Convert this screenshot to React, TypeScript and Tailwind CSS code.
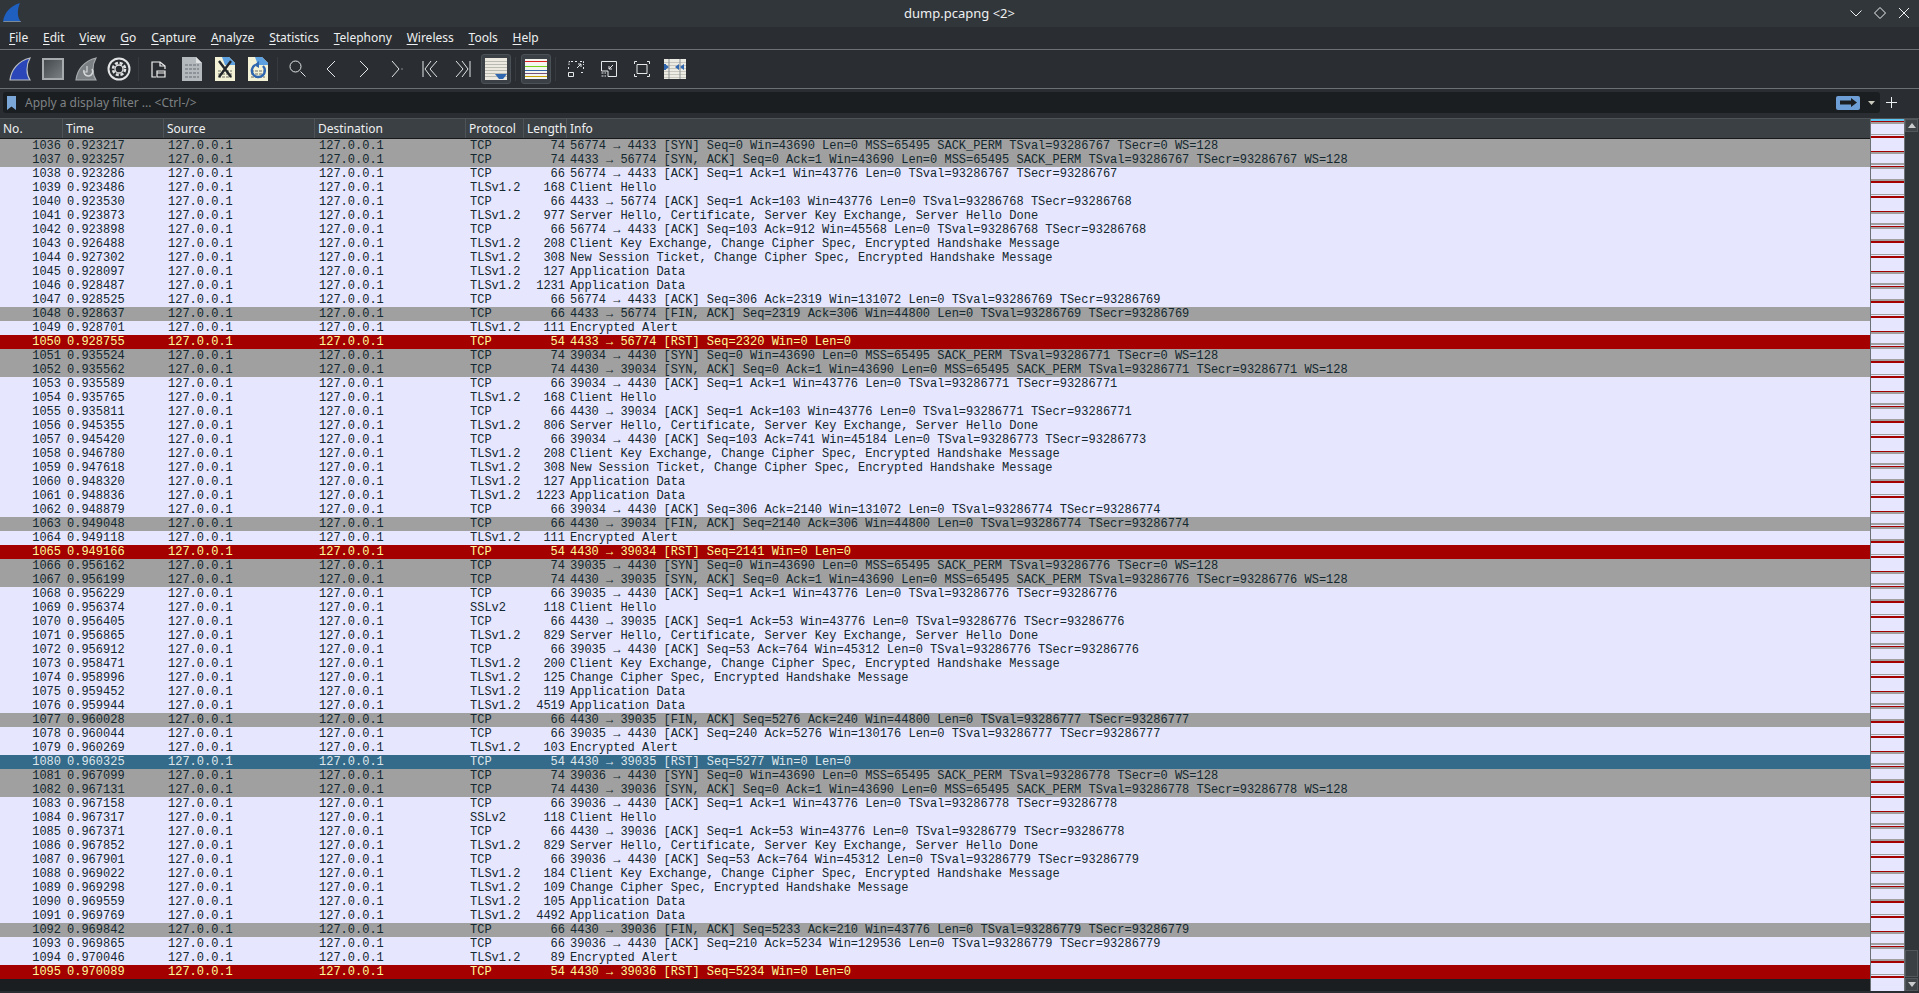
import { ReactNode } from 'react';

type Kind = 'n' | 'g' | 'r' | 's';

// time, protocol, length, info, kind
const T = 'TCP';
const L = 'TLSv1.2';
const S = 'SSLv2';
const HELLO = 'Server Hello, Certificate, Server Key Exchange, Server Hello Done';
const CKE = 'Client Key Exchange, Change Cipher Spec, Encrypted Handshake Message';
const NST = 'New Session Ticket, Change Cipher Spec, Encrypted Handshake Message';
const CCS = 'Change Cipher Spec, Encrypted Handshake Message';
const AD = 'Application Data';
const ALERT = 'Encrypted Alert';
const CH = 'Client Hello';
const syn = (a: number, b: number, ts: number) =>
  `${a} → ${b} [SYN] Seq=0 Win=43690 Len=0 MSS=65495 SACK_PERM TSval=${ts} TSecr=0 WS=128`;
const synAck = (a: number, b: number, ts: number) =>
  `${a} → ${b} [SYN, ACK] Seq=0 Ack=1 Win=43690 Len=0 MSS=65495 SACK_PERM TSval=${ts} TSecr=${ts} WS=128`;
const ack = (a: number, b: number, rest: string, ts: number, te: number = ts) =>
  `${a} → ${b} [ACK] ${rest} Len=0 TSval=${ts} TSecr=${te}`;
const fin = (a: number, b: number, rest: string, ts: number) =>
  `${a} → ${b} [FIN, ACK] ${rest} Len=0 TSval=${ts} TSecr=${ts}`;
const rst = (a: number, b: number, seq: number) => `${a} → ${b} [RST] Seq=${seq} Win=0 Len=0`;

const rows: [string, string, number, string, Kind?][] = [
  ['0.923217', T, 74, syn(56774, 4433, 93286767), 'g'],
  ['0.923257', T, 74, synAck(4433, 56774, 93286767), 'g'],
  ['0.923286', T, 66, ack(56774, 4433, 'Seq=1 Ack=1 Win=43776', 93286767)],
  ['0.923486', L, 168, CH],
  ['0.923530', T, 66, ack(4433, 56774, 'Seq=1 Ack=103 Win=43776', 93286768)],
  ['0.923873', L, 977, HELLO],
  ['0.923898', T, 66, ack(56774, 4433, 'Seq=103 Ack=912 Win=45568', 93286768)],
  ['0.926488', L, 208, CKE],
  ['0.927302', L, 308, NST],
  ['0.928097', L, 127, AD],
  ['0.928487', L, 1231, AD],
  ['0.928525', T, 66, ack(56774, 4433, 'Seq=306 Ack=2319 Win=131072', 93286769)],
  ['0.928637', T, 66, fin(4433, 56774, 'Seq=2319 Ack=306 Win=44800', 93286769), 'g'],
  ['0.928701', L, 111, ALERT],
  ['0.928755', T, 54, rst(4433, 56774, 2320), 'r'],
  ['0.935524', T, 74, syn(39034, 4430, 93286771), 'g'],
  ['0.935562', T, 74, synAck(4430, 39034, 93286771), 'g'],
  ['0.935589', T, 66, ack(39034, 4430, 'Seq=1 Ack=1 Win=43776', 93286771)],
  ['0.935765', L, 168, CH],
  ['0.935811', T, 66, ack(4430, 39034, 'Seq=1 Ack=103 Win=43776', 93286771)],
  ['0.945355', L, 806, HELLO],
  ['0.945420', T, 66, ack(39034, 4430, 'Seq=103 Ack=741 Win=45184', 93286773)],
  ['0.946780', L, 208, CKE],
  ['0.947618', L, 308, NST],
  ['0.948320', L, 127, AD],
  ['0.948836', L, 1223, AD],
  ['0.948879', T, 66, ack(39034, 4430, 'Seq=306 Ack=2140 Win=131072', 93286774)],
  ['0.949048', T, 66, fin(4430, 39034, 'Seq=2140 Ack=306 Win=44800', 93286774), 'g'],
  ['0.949118', L, 111, ALERT],
  ['0.949166', T, 54, rst(4430, 39034, 2141), 'r'],
  ['0.956162', T, 74, syn(39035, 4430, 93286776), 'g'],
  ['0.956199', T, 74, synAck(4430, 39035, 93286776), 'g'],
  ['0.956229', T, 66, ack(39035, 4430, 'Seq=1 Ack=1 Win=43776', 93286776)],
  ['0.956374', S, 118, CH],
  ['0.956405', T, 66, ack(4430, 39035, 'Seq=1 Ack=53 Win=43776', 93286776)],
  ['0.956865', L, 829, HELLO],
  ['0.956912', T, 66, ack(39035, 4430, 'Seq=53 Ack=764 Win=45312', 93286776)],
  ['0.958471', L, 200, CKE],
  ['0.958996', L, 125, CCS],
  ['0.959452', L, 119, AD],
  ['0.959944', L, 4519, AD],
  ['0.960028', T, 66, fin(4430, 39035, 'Seq=5276 Ack=240 Win=44800', 93286777), 'g'],
  ['0.960044', T, 66, ack(39035, 4430, 'Seq=240 Ack=5276 Win=130176', 93286777)],
  ['0.960269', L, 103, ALERT],
  ['0.960325', T, 54, rst(4430, 39035, 5277), 's'],
  ['0.967099', T, 74, syn(39036, 4430, 93286778), 'g'],
  ['0.967131', T, 74, synAck(4430, 39036, 93286778), 'g'],
  ['0.967158', T, 66, ack(39036, 4430, 'Seq=1 Ack=1 Win=43776', 93286778)],
  ['0.967317', S, 118, CH],
  ['0.967371', T, 66, ack(4430, 39036, 'Seq=1 Ack=53 Win=43776', 93286779, 93286778)],
  ['0.967852', L, 829, HELLO],
  ['0.967901', T, 66, ack(39036, 4430, 'Seq=53 Ack=764 Win=45312', 93286779)],
  ['0.969022', L, 184, CKE],
  ['0.969298', L, 109, CCS],
  ['0.969559', L, 105, AD],
  ['0.969769', L, 4492, AD],
  ['0.969842', T, 66, fin(4430, 39036, 'Seq=5233 Ack=210 Win=43776', 93286779), 'g'],
  ['0.969865', T, 66, ack(39036, 4430, 'Seq=210 Ack=5234 Win=129536', 93286779)],
  ['0.970046', L, 89, ALERT],
  ['0.970089', T, 54, rst(4430, 39036, 5234), 'r'],
];

const rowColors: Record<Kind, string> = {
  n: 'bg-[#e7e6ff] text-[#12272e]',
  g: 'bg-[#a0a0a0] text-[#12272e]',
  r: 'bg-[#a40000] text-[#fffc9c]',
  s: 'bg-[#346a8a] text-[#dfe7ec]',
};

const menus: [string, string][] = [
  ['F', 'ile'], ['E', 'dit'], ['V', 'iew'], ['G', 'o'], ['C', 'apture'], ['A', 'nalyze'],
  ['S', 'tatistics'], ['T', 'elephony'], ['W', 'ireless'], ['T', 'ools'], ['H', 'elp'],
];

function Tool({ children, active }: { children: ReactNode; active?: boolean }) {
  return (
    <div className="flex h-[33px] w-[33px] shrink-0 items-center justify-center">
      {active ? (
        <div className="flex h-[30px] w-[30px] items-center justify-center rounded-[3px] border border-[#4b5257] bg-[#3a4045]">
          {children}
        </div>
      ) : children}
    </div>
  );
}

function Sep() {
  return <div className="mx-[3px] h-[24px] w-px shrink-0 bg-[#363b40]" />;
}

const Line = ({ d, w = 18, h = 18 }: { d: string; w?: number; h?: number }) => (
  <svg width={w} height={h} viewBox={`0 0 ${w} ${h}`} fill="none" stroke="#e4e5e6" strokeWidth="1">
    <path d={d} />
  </svg>
);

const Page = ({ children }: { children: ReactNode }) => (
  <svg width="20" height="24" viewBox="0 0 20 24">
    <path d="M0 0H14L20 6V24H0Z" fill="#f3f1d6" />
    <path d="M7 0H14L20 6V8H10Z" fill="#5da0df" />
    {[14, 17, 20].map((y) => <path key={y} d={`M3 ${y}H17`} stroke="#9a9a8c" strokeWidth="1.5" strokeDasharray="3 1" />)}
    {children}
  </svg>
);

function Toolbar() {
  return (
    <div className="flex h-[38px] items-center pl-[3px]">
      <Tool>
        <svg width="22" height="24" viewBox="0 0 22 24">
          <path d="M1 23 C2 13 9 4 21 1 C17 8 17 17 21 23 Z" fill="#2a46b8" stroke="#bcc0c4" strokeWidth="1.2" />
        </svg>
      </Tool>
      <Tool>
        <div className="h-[22px] w-[22px] border-2 border-[#a7abae] bg-gradient-to-br from-[#44494d] to-[#7a7f83]" />
      </Tool>
      <Tool>
        <svg width="22" height="24" viewBox="0 0 22 24">
          <path d="M1 23 C2 13 9 4 21 1 C17 8 17 17 21 23 Z" fill="#7b8084" stroke="#a7abae" strokeWidth="1.2" />
          <path d="M9 13 A4.500 4.500 0 1 0 17 12" fill="none" stroke="#d4d6d7" strokeWidth="1.6" />
          <path d="M12 9 V15 H9" fill="none" stroke="#d4d6d7" strokeWidth="1.2" />
        </svg>
      </Tool>
      <Tool>
        <svg width="24" height="24" viewBox="0 0 24 24" fill="none">
          <circle cx="12" cy="12" r="10.5" stroke="#e2e3e4" strokeWidth="2" />
          <circle cx="12" cy="12" r="6" stroke="#e2e3e4" strokeWidth="2.6" strokeDasharray="3 1.7" />
          <circle cx="12" cy="12" r="4" stroke="#e2e3e4" strokeWidth="1.3" />
        </svg>
      </Tool>
      <Sep />
      <Tool>
        <svg width="15" height="17" viewBox="0 0 15 17" fill="none" stroke="#f1f1f1" strokeWidth="1.2">
          <path d="M5 16H1V1H9L14 5V8" />
          <path d="M9 1V5H14" />
          <path d="M6 10H14V16H6Z M6 12H14" />
        </svg>
      </Tool>
      <Tool>
        <svg width="20" height="24" viewBox="0 0 20 24">
          <path d="M0 0H14L20 6V24H0Z" fill="#b4b9bd" />
          <path d="M14 0L20 6H14Z" fill="#dfe1e3" />
          {[8, 12, 16, 20].map((y) => <path key={y} d={`M3 ${y}H17`} stroke="#7f858a" strokeWidth="1.5" strokeDasharray="3 1" />)}
        </svg>
      </Tool>
      <Tool>
        <Page>
          <path d="M4 4L16 20M16 4L4 20" stroke="#22272b" strokeWidth="2.4" />
        </Page>
      </Tool>
      <Tool>
        <Page>
          <path d="M7 8A6.500 6.500 0 1 0 15 9" fill="none" stroke="#2f66b0" strokeWidth="2.4" />
          <path d="M11 4L6 8L11 11Z" fill="#2f66b0" />
        </Page>
      </Tool>
      <Sep />
      <Tool><Line d="M11.5 11.5L16.5 16.5M12 6.5A5.5 5.5 0 1 1 1 6.5A5.5 5.5 0 1 1 12 6.5Z" /></Tool>
      <Tool><Line w={12} h={18} d="M10 1L2 9L10 17" /></Tool>
      <Tool><Line w={12} h={18} d="M2 1L10 9L2 17" /></Tool>
      <Tool><Line w={14} h={18} d="M2 1L9 9L2 17M12 8.500V9.500" /></Tool>
      <Tool><Line w={16} h={18} d="M1 1V17M9 1L3 9L9 17M15 1L8 9L15 17" /></Tool>
      <Tool><Line w={16} h={18} d="M15 1V17M7 1L13 9L7 17M1 1L8 9L1 17" /></Tool>
      <Tool active>
        <svg width="22" height="22" viewBox="0 0 22 22">
          <rect width="22" height="22" fill="#eceae0" />
          {[3, 6, 9, 12, 15, 18].map((y) => <rect key={y} y={y} width="22" height="1" fill="#b9bab2" />)}
          <path d="M10 16H22L18 21H14Z" fill="#2f66b0" />
        </svg>
      </Tool>
      <Sep />
      <Tool active>
        <svg width="22" height="20" viewBox="0 0 22 20">
          <rect width="22" height="20" fill="#f4f4f0" />
          <rect y="2" width="22" height="1" fill="#e02020" />
          <rect y="7" width="22" height="1" fill="#73d216" />
          <rect y="11" width="22" height="1" fill="#3465a4" />
          <rect y="14" width="22" height="1" fill="#75507b" />
          <rect y="17" width="22" height="1" fill="#c4a000" />
        </svg>
      </Tool>
      <Sep />
      <Tool>
        <svg width="16" height="16" viewBox="0 0 16 16" fill="none" stroke="#e6e7e8" strokeWidth="1">
          <path d="M5 .5H1V4M7 .5H10M12 .5H15.500V4M15.500 6V9M13 11.500H15.500M.5 6V8" strokeDasharray="2 1" />
          <path d="M.5 11.500H5.500V15.500H.5Z M9 7L13 3M10 3H13V6" />
        </svg>
      </Tool>
      <Tool>
        <svg width="16" height="16" viewBox="0 0 16 16" fill="none" stroke="#e6e7e8" strokeWidth="1">
          <path d="M.5 .5H15.500V15.500H7V10H.5Z" />
          <path d="M.5 12H5M.5 15H5" strokeDasharray="2 1" />
          <path d="M12 4L8 8M8 5V8H11" />
        </svg>
      </Tool>
      <Tool>
        <svg width="16" height="16" viewBox="0 0 16 16" fill="none" stroke="#e6e7e8" strokeWidth="1">
          <path d="M3 3.500H13V12.500H3Z" />
          <path d="M.5 3V.5H3M13 .5H15.500V3M15.500 13V15.500H13M3 15.500H.5V13" />
        </svg>
      </Tool>
      <Tool>
        <svg width="22" height="20" viewBox="0 0 22 20">
          <rect width="22" height="20" fill="#ecebe3" />
          {[3, 6, 9, 12, 15, 18].map((y) => <rect key={y} y={y} width="22" height="1" fill="#c6c6be" />)}
          <path d="M5 0V20M16 0V20" stroke="#8a8f93" />
          <path d="M1 5L5 8L1 11ZM11 8L15 5V11Z M0 5H2V11H0Z" fill="#2f66b0" />
          <path d="M20 5V11L16 8Z" fill="#2f66b0" />
        </svg>
      </Tool>
    </div>
  );
}

const headers: [string, string][] = [
  ['No.', 'w-[63px]'],
  ['Time', 'w-[101px]'],
  ['Source', 'w-[151px]'],
  ['Destination', 'w-[151px]'],
  ['Protocol', 'w-[58px]'],
  ['Length', 'w-[43px]'],
];

// the marks in the overview repeat every 15px, with the grey lines shifting around the red one
function Mark({ variant }: { variant: number }) {
  if (variant === 0) {
    return (
      <div className="h-[15px]">
        <div className="h-[10px]" />
        <div className="h-px bg-[#a0a0a0]" />
        <div className="h-px" />
        <div className="h-[2px] bg-[#a40000]" />
        <div className="h-px" />
      </div>
    );
  }
  if (variant === 1) {
    return (
      <div className="h-[15px]">
        <div className="h-[12px]" />
        <div className="h-px bg-[#a40000]" />
        <div className="h-[2px] bg-[#a0a0a0]" />
      </div>
    );
  }
  if (variant === 2) {
    return (
      <div className="h-[15px]">
        <div className="h-[9px]" />
        <div className="h-[2px] bg-[#a0a0a0]" />
        <div className="h-px" />
        <div className="h-px bg-[#a40000]" />
        <div className="h-[2px] bg-[#a0a0a0]" />
      </div>
    );
  }
  return (
    <div className="h-[15px]">
      <div className="h-[10px]" />
      <div className="h-[2px] bg-[#a0a0a0]" />
      <div className="h-[2px] bg-[#a40000]" />
      <div className="h-px" />
    </div>
  );
}

export default function App() {
  return (
    <div className="flex h-[993px] w-[1919px] flex-col overflow-hidden bg-[#2a2e32] font-['Noto_Sans',sans-serif] text-[12px] text-[#eff0f1]">
      {/* title bar */}
      <div className="relative flex h-[27px] shrink-0 items-center justify-center bg-[#31363b]">
        <div className="absolute left-[3px] top-[3px]">
          <svg width="20" height="20" viewBox="0 0 20 20">
            <path d="M0 19 C1 10 7 3 17 0 C14 7 14 14 18 19 Z" fill="#1f5fc0" />
            <path d="M0 19 H18 L17.500 18 H1 Z" fill="#7b8a96" />
          </svg>
        </div>
        <span className="text-[13px] leading-none">dump.pcapng &lt;2&gt;</span>
        <div className="absolute right-[9px] top-[7px] flex items-center gap-[12px]">
          <svg width="12" height="12" viewBox="0 0 12 12" fill="none" stroke="#eff0f1"><path d="M.5 3.500L6 9L11.500 3.500" /></svg>
          <svg width="12" height="12" viewBox="0 0 12 12" fill="none" stroke="#eff0f1"><path d="M6 .5L11.500 6L6 11.500L.5 6Z" /></svg>
          <svg width="12" height="12" viewBox="0 0 12 12" fill="none" stroke="#eff0f1"><path d="M1 1L11 11M11 1L1 11" /></svg>
        </div>
      </div>

      {/* menu */}
      <div className="flex h-[22px] shrink-0 items-center gap-[14.8px] bg-[#2a2e32] pl-[9px]">
        {menus.map(([u, rest], i) => (
          <span key={i} className="leading-none"><span className="underline underline-offset-2">{u}</span>{rest}</span>
        ))}
      </div>
      <div className="h-px shrink-0 bg-[#6b7075]" />

      <Toolbar />
      <div className="h-px shrink-0 bg-[#6b7075]" />

      {/* filter */}
      <div className="flex h-[29px] shrink-0 items-start pl-[3px] pr-[22px] pt-[3px]">
        <div className="flex h-[21px] flex-1 items-center rounded-[3px] bg-[#1b1e20] pl-[4px] pr-[5px]">
          <svg width="9" height="14" viewBox="0 0 9 14" className="shrink-0"><path d="M0 0H9V14L4.500 10.500L0 14Z" fill="#7aa7d8" /></svg>
          <span className="ml-[9px] flex-1 text-[#7e8285]">Apply a display filter ... &lt;Ctrl-/&gt;</span>
          <div className="flex h-[14px] w-[24px] items-center justify-center rounded-[2px] bg-[#6d9fd6]">
            <svg width="17" height="9" viewBox="0 0 17 9"><path d="M0 2.500H11V0L17 4.500L11 9V6.500H0Z" fill="#1b1e20" /></svg>
          </div>
          <svg width="7" height="4" viewBox="0 0 7 4" className="ml-[8px]"><path d="M0 0H7L3.500 4Z" fill="#c9c9bd" /></svg>
        </div>
        <svg width="11" height="11" viewBox="0 0 11 11" className="ml-[6px] mt-[5px]" fill="none" stroke="#eff0f1"><path d="M5.500 0V11M0 5.500H11" /></svg>
      </div>

      <div className="flex h-[873px] shrink-0 border-t border-[#4e5358]">
        {/* packet list */}
        <div className="flex min-w-0 flex-1 flex-col bg-[#1b1e20]">
          <div className="flex h-[20px] shrink-0 items-center border-b border-[#17191b] bg-[#3b4045]">
            {headers.map(([h, w]) => (
              <div key={h} className={`${w} flex h-full shrink-0 items-center border-r border-[#4e5358] pl-[3px]`}>{h}</div>
            ))}
            <div className="pl-[3px]">Info</div>
          </div>
          <div className="font-['Liberation_Mono',monospace] text-[12px] leading-[14px]">
            {rows.map(([time, proto, len, info, kind], i) => (
              <div key={i} className={`flex h-[14px] whitespace-pre ${rowColors[kind ?? 'n']}`}>
                <div className="w-[61px] shrink-0 text-right">{1036 + i}</div>
                <div className="w-[101px] shrink-0 pl-[6px]">{time}</div>
                <div className="w-[151px] shrink-0 pl-[6px]">127.0.0.1</div>
                <div className="w-[151px] shrink-0 pl-[6px]">127.0.0.1</div>
                <div className="w-[58px] shrink-0 pl-[6px]">{proto}</div>
                <div className="w-[43px] shrink-0 text-right">{len}</div>
                <div className="pl-[5px]">{info}</div>
              </div>
            ))}
          </div>
        </div>

        {/* intelligent scrollbar */}
        <div className="h-[872px] w-[35px] shrink-0 overflow-hidden border-x border-[#6b7075] bg-[#e7e6ff]">
          <div className="h-[2px] bg-[#5ec4f0]" />
          <div className="h-px bg-[#a40000]" />
          <div className="h-[2px] bg-[#a0a0a0]" />
          {Array.from({ length: 58 }).map((_, i) => (
            <Mark key={i} variant={i % 4} />
          ))}
        </div>

        {/* scrollbar */}
        <div className="flex h-[872px] w-[14px] shrink-0 flex-col bg-[#31363b] pr-px">
          <div className="flex h-[13px] items-center justify-center border border-[#52575b] bg-[#3f4449]">
            <svg width="8" height="5" viewBox="0 0 8 5"><path d="M4 0L8 5H0Z" fill="#c9cbcc" /></svg>
          </div>
          <div className="flex-1" />
          <div className="h-[27px] border border-[#52575b] bg-[#3b4045]" />
          <div className="mt-px flex h-[13px] items-center justify-center border border-[#52575b] bg-[#3f4449]">
            <svg width="8" height="5" viewBox="0 0 8 5"><path d="M0 0H8L4 5Z" fill="#c9cbcc" /></svg>
          </div>
        </div>
      </div>
    </div>
  );
}
